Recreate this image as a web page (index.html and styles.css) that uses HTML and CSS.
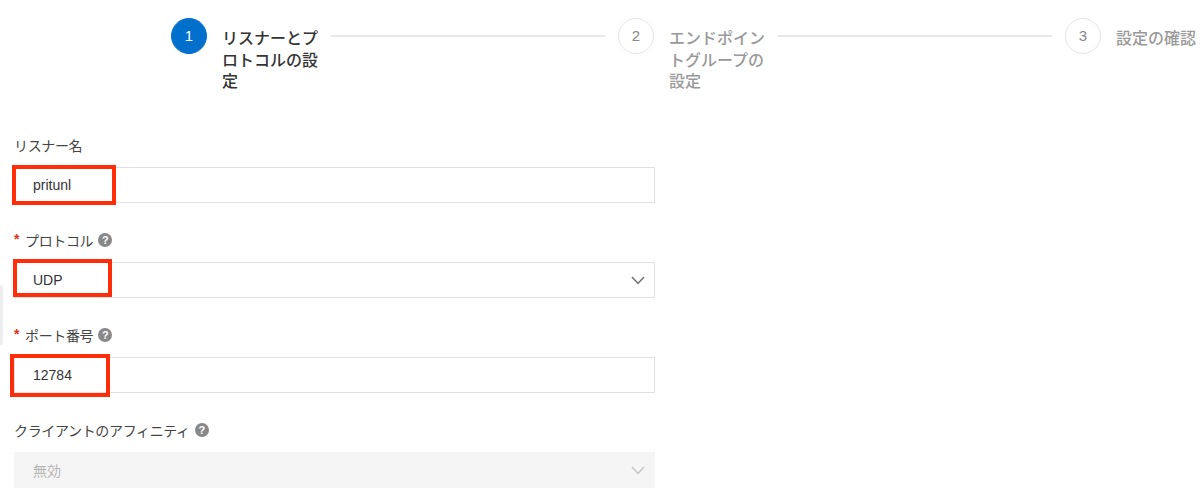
FILE: index.html
```html
<!DOCTYPE html>
<html lang="ja">
<head>
    <meta charset="UTF-8">
    <title>リスナーとプロトコルの設定</title>
    <link rel="stylesheet" href="styles.css">
</head>
<body>

    <div class="side-tab"></div>

    <div class="steps">
        <div class="step active">
            <div class="step-num">1</div>
            <div class="step-title">リスナーとプロトコルの設定</div>
            <div class="step-line"></div>
        </div>
        <div class="step">
            <div class="step-num">2</div>
            <div class="step-title">エンドポイントグループの設定</div>
            <div class="step-line"></div>
        </div>
        <div class="step last">
            <div class="step-num">3</div>
            <div class="step-title">設定の確認</div>
        </div>
    </div>

    <form class="form">
        <div class="field">
            <label class="field-label">リスナー名</label>
            <div class="control">
                <span class="value">pritunl</span>
                <span class="mark mark-name"></span>
            </div>
        </div>

        <div class="field">
            <label class="field-label"><span class="req">*</span>プロトコル<span class="help">?</span></label>
            <div class="control">
                <span class="value">UDP</span>
                <svg class="chevron" width="14" height="9" viewBox="0 0 14 9"><path d="M1 1l6 6.5L13 1" fill="none" stroke="#707070" stroke-width="1.5"/></svg>
                <span class="mark mark-protocol"></span>
            </div>
        </div>

        <div class="field">
            <label class="field-label"><span class="req">*</span>ポート番号<span class="help">?</span></label>
            <div class="control">
                <span class="value">12784</span>
                <span class="mark mark-port"></span>
            </div>
        </div>

        <div class="field">
            <label class="field-label">クライアントのアフィニティ<span class="help">?</span></label>
            <div class="control disabled">
                <span class="value">無効</span>
                <svg class="chevron" width="14" height="9" viewBox="0 0 14 9"><path d="M1 1l6 6.5L13 1" fill="none" stroke="#c4c4c4" stroke-width="1.5"/></svg>
            </div>
        </div>
    </form>

</body>
</html>
```

FILE: styles.css
```css
html, body {
    height: 100%;
}
body {
    margin: 0;
    background: #fff;
    color: #333;
    font-family: "Noto Sans CJK JP", "Liberation Sans", sans-serif;
    font-size: 14px;
    overflow: hidden;
    position: relative;
}

/* stepper */
.steps {
    display: flex;
    padding: 18px 4px 0 171px;
    height: 135px;
    box-sizing: border-box;
}
.step {
    display: flex;
    flex: 1;
    align-items: flex-start;
}
.step.last {
    flex: none;
}
.step-num {
    width: 36px;
    height: 36px;
    flex: none;
    box-sizing: border-box;
    border: 1px solid #e3e3e3;
    border-radius: 50%;
    color: #888;
    font-family: "Liberation Sans", sans-serif;
    font-size: 15px;
    line-height: 34px;
    text-align: center;
}
.step-title {
    width: 96px;
    flex: none;
    margin: 9px 13px 0 15px;
    color: #999;
    font-size: 16px;
    font-weight: 500;
    line-height: 21.5px;
}
.step.last .step-title {
    width: auto;
    margin-right: 0;
    white-space: nowrap;
}
.step.active .step-num {
    background: #0070cc;
    border-color: #0070cc;
    color: #fff;
}
.step.active .step-title {
    color: #333;
}
.step-line {
    flex: 1;
    height: 2px;
    margin: 17px 13px 0 0;
    background: #e8e8e8;
}

/* form */
.form {
    width: 641px;
    margin-left: 14px;
}
.field {
    margin-bottom: 27px;
}
.field:last-child {
    margin-bottom: 0;
}
.field-label {
    display: flex;
    align-items: center;
    height: 20px;
    margin-bottom: 12px;
    color: #444;
    font-size: 14px;
    letter-spacing: -0.35px;
}
.req {
    width: 11px;
    margin-top: -3px;
    color: #e0301e;
    font-family: "Liberation Sans", sans-serif;
    font-size: 14px;
    font-weight: bold;
}
.help {
    width: 14px;
    height: 14px;
    margin-left: 5px;
    border-radius: 50%;
    background: #888;
    color: #fff;
    font-family: "Liberation Sans", sans-serif;
    font-size: 11px;
    font-weight: bold;
    letter-spacing: 0;
    line-height: 14px;
    text-align: center;
}
.control {
    position: relative;
    display: flex;
    align-items: center;
    justify-content: space-between;
    height: 36px;
    box-sizing: border-box;
    padding: 0 9px 0 18px;
    border: 1px solid #e1e1e1;
    color: #333;
    font-family: "Liberation Sans", "Noto Sans CJK JP", sans-serif;
    font-size: 14px;
}
.control.disabled {
    background: #f5f5f5;
    border-color: #f5f5f5;
    color: #b5b5b5;
}

/* red annotation boxes drawn over the screenshot */
.mark {
    position: absolute;
    box-sizing: border-box;
    border: 4px solid #ff2d0a;
}
.mark-name {
    left: -3px;
    top: -3px;
    width: 104px;
    height: 40px;
}
.mark-protocol {
    left: -2px;
    top: -4px;
    width: 99px;
    height: 38px;
}
.mark-port {
    left: -5px;
    top: -4px;
    width: 100px;
    height: 43px;
}

.side-tab {
    position: absolute;
    left: 0;
    top: 285px;
    width: 3px;
    height: 60px;
    border-radius: 0 3px 3px 0;
    background: #eee;
}
```
